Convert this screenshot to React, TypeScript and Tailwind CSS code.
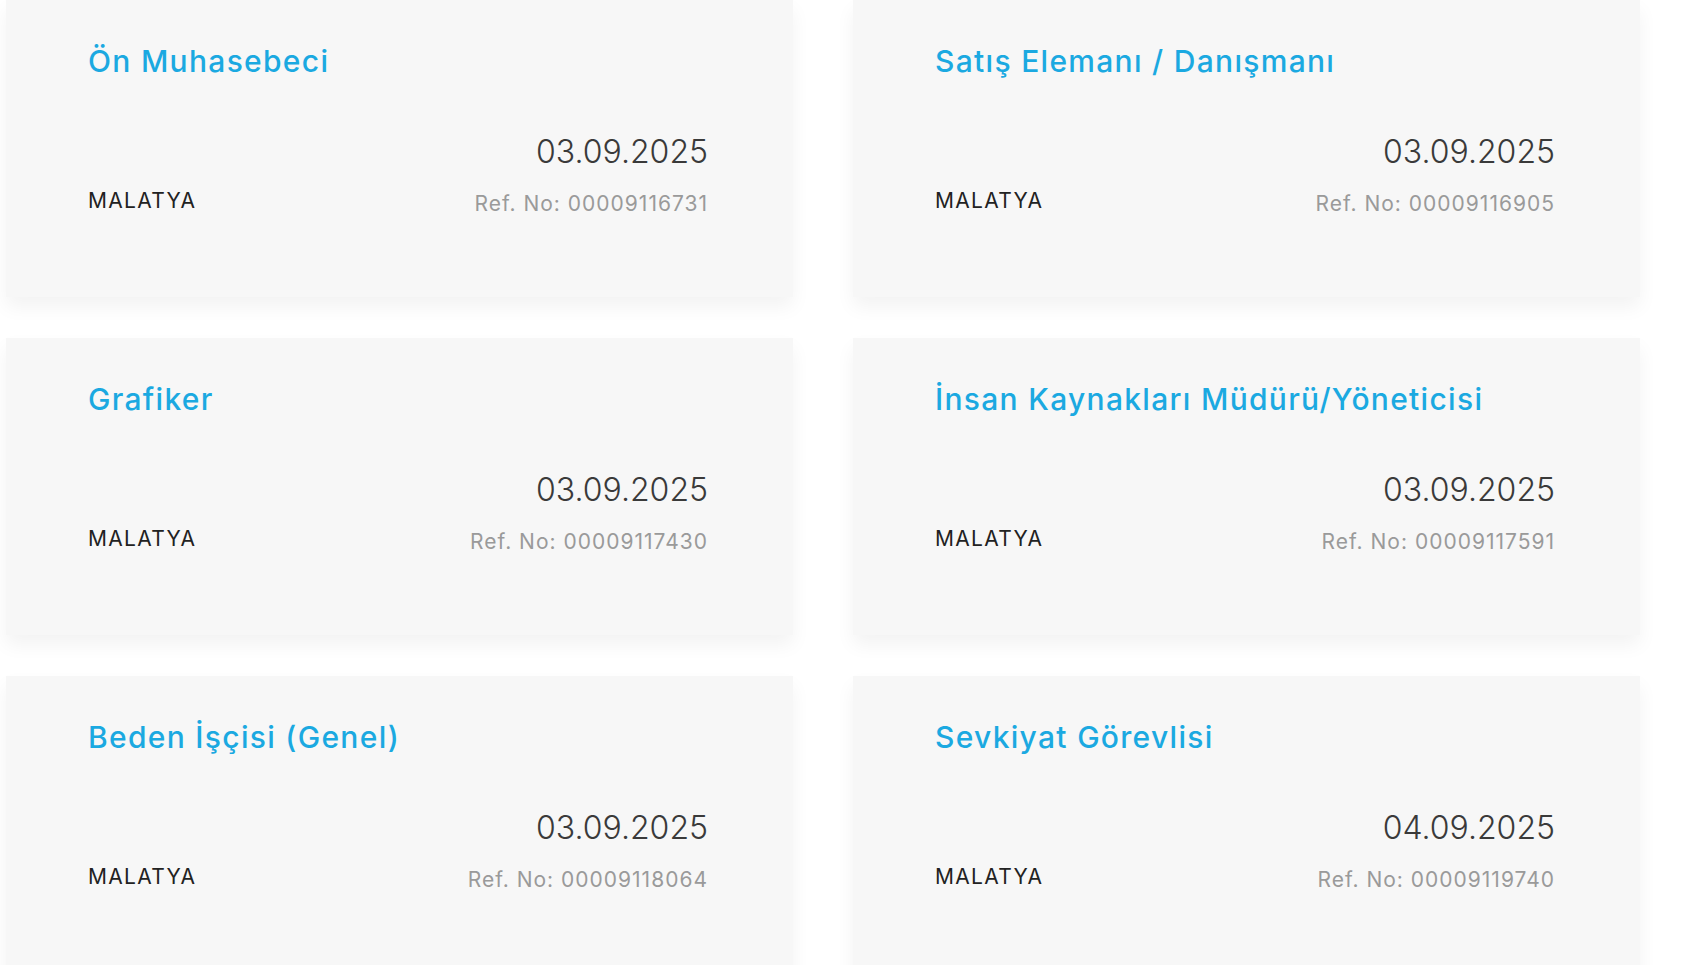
import React from 'react';

type Job = {
  title: string;
  city: string;
  date: string;
  refNo: string;
};

const JOBS: Job[] = [
  { title: 'Ön Muhasebeci', city: 'MALATYA', date: '03.09.2025', refNo: '00009116731' },
  { title: 'Satış Elemanı / Danışmanı', city: 'MALATYA', date: '03.09.2025', refNo: '00009116905' },
  { title: 'Grafiker', city: 'MALATYA', date: '03.09.2025', refNo: '00009117430' },
  { title: 'İnsan Kaynakları Müdürü/Yöneticisi', city: 'MALATYA', date: '03.09.2025', refNo: '00009117591' },
  { title: 'Beden İşçisi (Genel)', city: 'MALATYA', date: '03.09.2025', refNo: '00009118064' },
  { title: 'Sevkiyat Görevlisi', city: 'MALATYA', date: '04.09.2025', refNo: '00009119740' },
];

const JobCard: React.FC<{ job: Job }> = ({ job }) => (
  <a
    href="#"
    className="flex h-[297px] flex-col bg-[#f7f7f7] pt-[40px] pr-[85px] pl-[82px] shadow-[0_10px_18px_rgba(0,0,0,0.05)]"
  >
    <h3 className="text-[30px] leading-[42px] font-medium tracking-[1.3px] text-[#1ba9e1]">{job.title}</h3>
    <div className="mt-[48px] flex items-end justify-between">
      <span className="mb-[3px] text-[21px] leading-[28px] font-normal tracking-[1.3px] text-[#222]">{job.city}</span>
      <div className="flex flex-col items-end">
        <span className="text-[32px] leading-[44px] font-light text-[#3a3a3a]">{job.date}</span>
        <span className="mt-[16px] text-[21px] leading-[28px] font-normal tracking-[1px] text-[#9a9a9a]">
          Ref. No: {job.refNo}
        </span>
      </div>
    </div>
  </a>
);

const App: React.FC = () => {
  return (
    <div className="h-[965px] w-full overflow-hidden bg-white font-['Inter',sans-serif]">
      <div className="grid grid-cols-[787px_787px] gap-x-[60px] gap-y-[41px] pl-[6px]">
        {JOBS.map((job) => (
          <JobCard key={job.refNo} job={job} />
        ))}
      </div>
    </div>
  );
};

export default App;
